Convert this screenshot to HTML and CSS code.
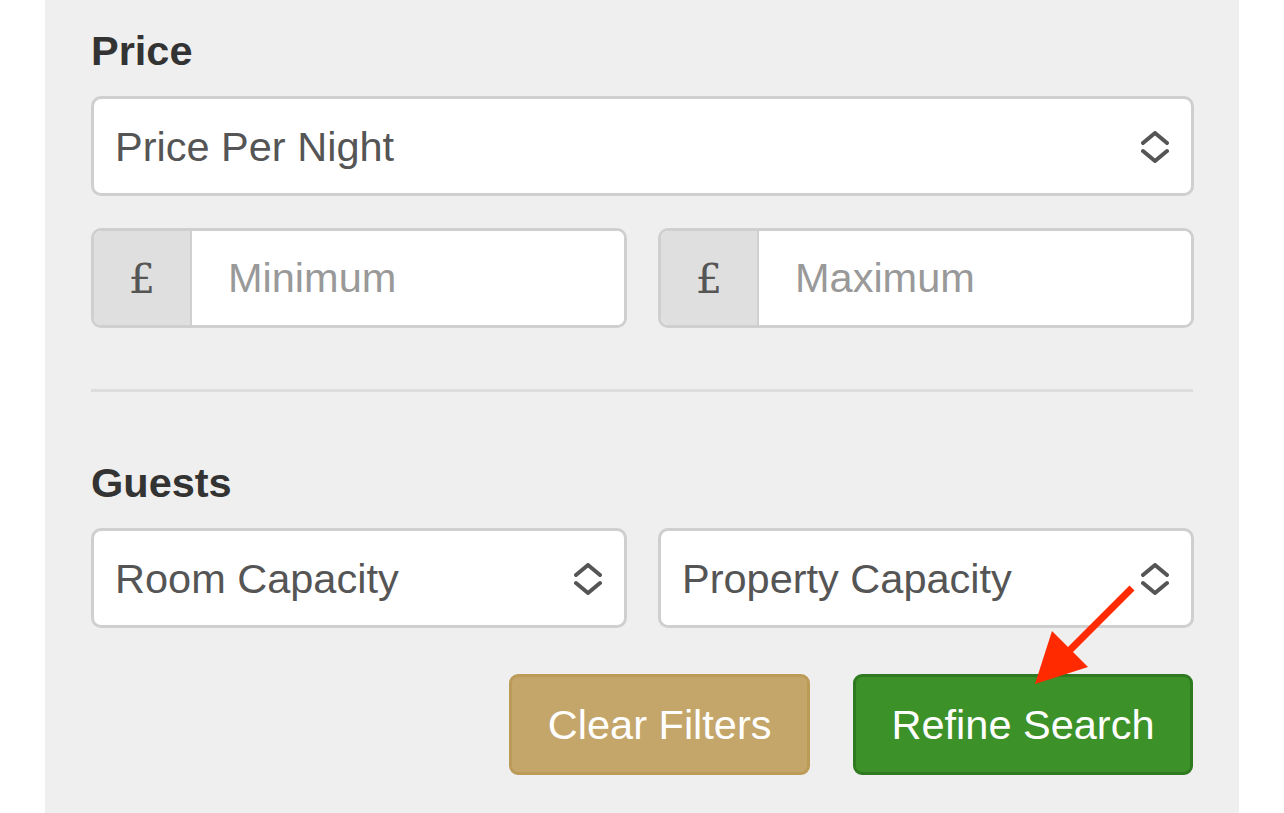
FILE: index.html
```html
<!DOCTYPE html>
<html lang="en">
<head>
<meta charset="utf-8">
<title>Refine Search</title>
<link rel="stylesheet" href="styles.css">
</head>
<body>
<div class="panel">
  <h2 class="heading">Price</h2>
  <div class="select">
    <span class="select-text">Price Per Night</span>
    <svg class="chev" width="28" height="32" viewBox="0 0 28 32"><path d="M2 12 L14 2 L26 12 M2 20 L14 30 L26 20" fill="none" stroke="#555" stroke-width="4" stroke-linecap="round" stroke-linejoin="round"/></svg>
  </div>
  <div class="row two">
    <div class="input-group">
      <span class="addon">£</span>
      <input class="field" type="text" placeholder="Minimum">
    </div>
    <div class="input-group">
      <span class="addon">£</span>
      <input class="field" type="text" placeholder="Maximum">
    </div>
  </div>
  <hr class="divider">
  <h2 class="heading guests">Guests</h2>
  <div class="row two">
    <div class="select">
      <span class="select-text">Room Capacity</span>
      <svg class="chev" width="28" height="32" viewBox="0 0 28 32"><path d="M2 12 L14 2 L26 12 M2 20 L14 30 L26 20" fill="none" stroke="#555" stroke-width="4" stroke-linecap="round" stroke-linejoin="round"/></svg>
    </div>
    <div class="select">
      <span class="select-text">Property Capacity</span>
      <svg class="chev" width="28" height="32" viewBox="0 0 28 32"><path d="M2 12 L14 2 L26 12 M2 20 L14 30 L26 20" fill="none" stroke="#555" stroke-width="4" stroke-linecap="round" stroke-linejoin="round"/></svg>
    </div>
  </div>
  <div class="actions">
    <button class="btn btn-clear" type="button">Clear Filters</button>
    <button class="btn btn-refine" type="button">Refine Search</button>
  </div>
  <svg class="arrow" width="110" height="110" viewBox="0 0 110 110">
    <line x1="97" y1="5" x2="28" y2="74" stroke="#ff2a00" stroke-width="7" stroke-linecap="butt"/>
    <polygon points="0,101 17,48 53,84" fill="#ff2a00"/>
  </svg>
</div>
</body>
</html>
```
FILE: styles.css
```css
html, body {
  margin: 0;
  padding: 0;
  background: #ffffff;
}
body {
  font-family: "Liberation Sans", Arial, sans-serif;
  color: #555;
}
.panel {
  position: relative;
  margin-left: 45px;
  width: 1194px;
  box-sizing: border-box;
  min-height: 813px;
  background: #efefef;
  padding: 28px 45px 40px 46px;
}
.heading {
  margin: 0 0 23px;
  font-size: 41.5px;
  line-height: 45px;
  font-weight: bold;
  color: #333;
}
.guests {
  margin-top: 68px;
}
.select {
  box-sizing: border-box;
  height: 100px;
  border: 3px solid #cfcfcf;
  border-radius: 10px;
  background: #fff;
  display: flex;
  align-items: center;
  justify-content: space-between;
  padding: 1px 22px 0 21px;
}
.select-text {
  font-size: 41.5px;
  color: #555;
  white-space: nowrap;
}
.chev {
  flex: none;
}
.row.two {
  display: grid;
  grid-template-columns: 1fr 1fr;
  column-gap: 31px;
}
.select + .row.two {
  margin-top: 32px;
}
.input-group {
  box-sizing: border-box;
  height: 100px;
  border: 3px solid #cfcfcf;
  border-radius: 10px;
  background: #fff;
  display: flex;
  overflow: hidden;
}
.addon {
  flex: none;
  width: 96px;
  background: #dfdfdf;
  border-right: 2px solid #cfcfcf;
  display: flex;
  align-items: center;
  justify-content: center;
  font-size: 41.5px;
  color: #555;
  font-family: "DejaVu Serif", "Liberation Serif", serif;
}
.field {
  flex: 1;
  min-width: 0;
  border: 0;
  outline: none;
  background: #fff;
  padding: 0 0 0 36px;
  font-family: "Liberation Sans", Arial, sans-serif;
  font-size: 41.5px;
  color: #555;
}
.field::placeholder {
  color: #999;
}
.divider {
  margin: 61px 1px 0 0;
  border: 0;
  height: 3px;
  background: #dddddd;
}
.actions {
  display: flex;
  justify-content: flex-end;
  gap: 43px;
  margin-top: 46px;
  padding-right: 1px;
}
.btn {
  box-sizing: border-box;
  height: 101px;
  padding: 0 35.5px;
  border-radius: 9px;
  font-family: "Liberation Sans", Arial, sans-serif;
  font-size: 41.5px;
  color: #fff;
  cursor: pointer;
}
.btn-clear {
  background: #c4a66b;
  border: 3px solid #bc9b59;
}
.btn-refine {
  background: #3d9129;
  border: 3px solid #2f7a20;
}
.arrow {
  position: absolute;
  left: 990px;
  top: 583px;
}
```
